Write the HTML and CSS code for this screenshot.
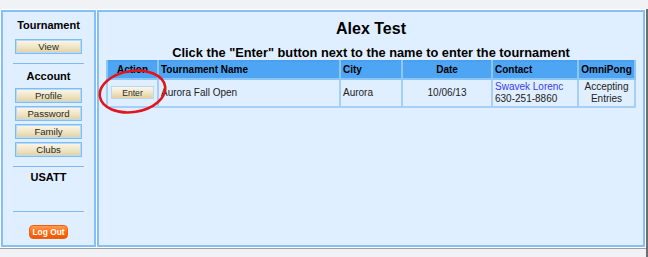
FILE: index.html
```html
<!DOCTYPE html>
<html>
<head>
<meta charset="utf-8">
<link rel="stylesheet" href="styles.css">
</head>
<body>
<div class="window">
  <div class="main">
    <div class="side">
      <div class="side-title">Tournament</div>
      <button class="btn btn-first">View</button>
      <div class="rule"></div>
      <div class="side-title t2">Account</div>
      <button class="btn btn-a">Profile</button>
      <button class="btn btn-b">Password</button>
      <button class="btn btn-b">Family</button>
      <button class="btn btn-b">Clubs</button>
      <div class="rule"></div>
      <div class="side-title t3">USATT</div>
      <div class="rule r3"></div>
      <button class="logout">Log Out</button>
    </div>
    <div class="content">
      <h1 class="title">Alex Test</h1>
      <h2 class="subtitle">Click the "Enter" button next to the name to enter the tournament</h2>
      <table class="tourn">
        <colgroup>
          <col class="c1"><col class="c2"><col class="c3"><col class="c4"><col class="c5"><col class="c6">
        </colgroup>
        <thead>
          <tr>
            <th class="ctr">Action</th>
            <th>Tournament Name</th>
            <th>City</th>
            <th class="ctr">Date</th>
            <th>Contact</th>
            <th class="ctr">OmniPong</th>
          </tr>
        </thead>
        <tbody>
          <tr>
            <td class="ctr"><button class="enter">Enter</button></td>
            <td>Aurora Fall Open</td>
            <td>Aurora</td>
            <td class="ctr">10/06/13</td>
            <td><a class="contact" href="#">Swavek Lorenc</a><br>630-251-8860</td>
            <td class="ctr">Accepting<br>Entries</td>
          </tr>
        </tbody>
      </table>
      <svg class="circle" width="76" height="50" viewBox="0 0 76 50">
        <ellipse cx="35.5" cy="23.5" rx="33" ry="20.5" fill="none" stroke="#e3141c" stroke-width="2.6" transform="rotate(-9 35.5 23.5)"/>
      </svg>
    </div>
  </div>
</div>
</body>
</html>
```
FILE: styles.css
```css
html, body {
  margin: 0;
  padding: 0;
}
body {
  background: #f1f2f6;
  font-family: "Liberation Sans", Arial, sans-serif;
  width: 648px;
  height: 257px;
  overflow: hidden;
}
.window {
  width: 646px;
  height: 257px;
  border-right: 2px solid #6e6e6e;
}
.main {
  margin-top: 9px;
  background: #ffffff;
  display: flex;
  gap: 1px;
  padding: 1px 1px 1px 1px;
  border-bottom: 1px solid #a0a0a4;
  height: 237px;
}
.side {
  box-sizing: border-box;
  width: 95px;
  height: 237px;
  background: #e0efff;
  border: 2px solid #86bff4;
  display: flex;
  flex-direction: column;
  align-items: center;
}
.side-title {
  margin-top: 7px;
  font-size: 11px;
  line-height: 13px;
  font-weight: bold;
  color: #000;
  height: 13px;
}
.side-title.t2 { margin-top: 6px; }
.side-title.t3 { margin-top: 4px; }
.btn {
  box-sizing: border-box;
  width: 67px;
  height: 15px;
  margin: 0;
  padding: 0;
  font-family: "Liberation Sans", Arial, sans-serif;
  font-size: 9.6px;
  line-height: 11px;
  color: #2a2a2a;
  border: 1px solid #7ebdf4;
  box-shadow: inset 0 0 0 1px #b6daf9;
  background: linear-gradient(#fbf7ea, #efe4c4 55%, #e2d09c);
}
.btn-first { margin-top: 7px; }
.btn-a { margin-top: 5px; }
.btn-b { margin-top: 3px; }
.rule {
  width: 71px;
  height: 1px;
  background: #7fb9ef;
  margin-top: 9px;
}
.rule.r3 { margin-top: 27px; }
.logout {
  box-sizing: border-box;
  margin-top: 13px;
  width: 39px;
  height: 14px;
  padding: 0;
  border: 1px solid #f06010;
  border-radius: 4px;
  background: linear-gradient(#ff9a50, #ff6a10 55%, #f05800);
  color: #fff;
  font-family: "Liberation Sans", Arial, sans-serif;
  font-size: 8.4px;
  font-weight: bold;
  line-height: 12px;
}
.content {
  position: relative;
  box-sizing: border-box;
  width: 548px;
  height: 237px;
  background: #e0efff;
  border: 2px solid #86bff4;
  display: flex;
  flex-direction: column;
  align-items: center;
}
.title {
  margin: 7px 0 0 0;
  font-size: 16px;
  line-height: 19px;
  font-weight: bold;
  color: #000;
}
.subtitle {
  margin: 7px 0 0 0;
  font-size: 12.8px;
  line-height: 15px;
  font-weight: bold;
  color: #000;
}
.tourn {
  width: 528px;
  table-layout: fixed;
  border-collapse: collapse;
  border: 2px solid #4c9fee;
  font-size: 10px;
}
.c1 { width: 51px; }
.c2 { width: 182px; }
.c3 { width: 62px; }
.c4 { width: 90px; }
.c5 { width: 86px; }
.c6 { width: 57px; }
.tourn th {
  background: #4ea5f3;
  color: #000;
  font-weight: bold;
  text-align: left;
  height: 16px;
  padding: 0 2px;
  border: 2px solid #8cc6f7;
  border-top: none;
  line-height: 12px;
}
.tourn td {
  background: #e0efff;
  color: #222;
  padding: 1px 2px 2px;
  border: 2px solid #a4cff6;
  line-height: 11.5px;
  height: 22px;
  vertical-align: middle;
  white-space: nowrap;
}
.tourn .ctr { text-align: center; }
.enter {
  box-sizing: border-box;
  width: 43px;
  height: 13px;
  padding: 0;
  margin: 0;
  font-family: "Liberation Sans", Arial, sans-serif;
  font-size: 8.6px;
  line-height: 10px;
  color: #2a2a2a;
  border: 1px solid #b9d8f5;
  background: linear-gradient(#fbf7ea, #efe4c4 55%, #e2d09c);
}
.contact {
  color: #3b3bf0;
  text-decoration: none;
}
.circle {
  position: absolute;
  left: -2px;
  top: 56px;
}
```
